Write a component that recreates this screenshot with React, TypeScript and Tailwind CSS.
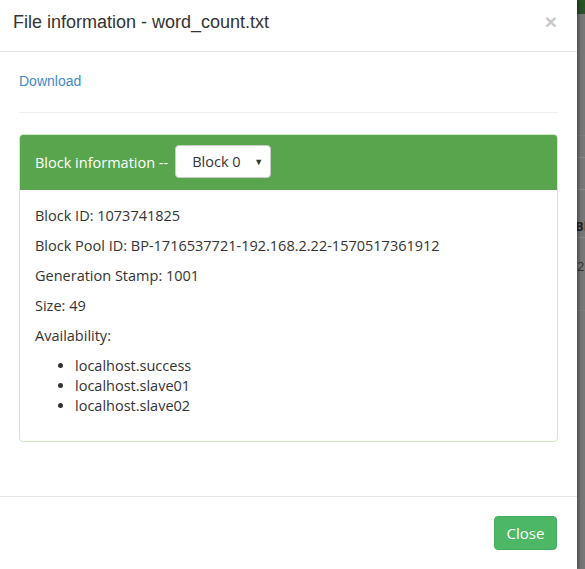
export default function App() {
  const hosts = ["localhost.success", "localhost.slave01", "localhost.slave02"];
  return (
    <div className="flex h-[569px] w-[585px] overflow-hidden bg-[#777]">
      <div className="relative flex w-[577px] shrink-0 flex-col bg-white text-[#333] shadow-[2px_0_3px_rgba(0,0,0,0.35)]">
        <div className="flex h-[52px] items-center justify-between border-b border-[#e5e5e5] pl-[13px] pr-[20px]">
          <h4 className="-mt-[8px] font-['Liberation_Sans',Arial,sans-serif] text-[18px] leading-[26px] text-[#333]">
            File information - word_count.txt
          </h4>
          <span className="-mt-[8px] font-['Liberation_Sans',Arial,sans-serif] text-[21px] font-bold leading-none text-[#c9c9c9]">
            ×
          </span>
        </div>

        <div className="px-[19px] pt-[19px] font-['Open_Sans',sans-serif]">
          <a className="block font-['Liberation_Sans',Arial,sans-serif] text-[14px] leading-[20px] text-[#428bca]">Download</a>
          <div className="mt-[21px] border-t border-[#eee]" />

          <div className="mt-[21px] rounded-[4px] border border-[#d6e9c6]">
            <div className="flex h-[55px] items-center gap-[7px] rounded-t-[3px] bg-[#58a54d] px-[15px] text-[14.5px] text-white">
              <span>Block information --</span>
              <div className="-mt-[2px] flex h-[33px] w-[96px] items-center justify-between rounded-[4px] border border-[#ccc] bg-white pl-[16px] pr-[7px] text-[#333]">
                <span>Block 0</span>
                <span className="text-[9px]">▼</span>
              </div>
            </div>
            <div className="px-[15px] pb-[15px] pt-[16px] text-[14.5px] leading-[20px]">
              <p className="mb-[10px]">Block ID: 1073741825</p>
              <p className="mb-[10px]">Block Pool ID: BP-1716537721-192.168.2.22-1570517361912</p>
              <p className="mb-[10px]">Generation Stamp: 1001</p>
              <p className="mb-[10px]">Size: 49</p>
              <p className="mb-[10px]">Availability:</p>
              <ul className="mb-[10px] list-disc pl-[40px]">
                {hosts.map((h) => (
                  <li key={h}>{h}</li>
                ))}
              </ul>
            </div>
          </div>
        </div>

        <div className="mt-auto flex h-[73px] justify-end border-t border-[#e5e5e5] px-[20px] pt-[19px]">
          <button className="h-[34px] w-[63px] rounded-[4px] border border-[#44ad5d] bg-[#4cb866] font-['Open_Sans',sans-serif] text-[15px] text-white">
            Close
          </button>
        </div>
      </div>

      <div className="flex flex-1 flex-col">
        <div className="h-[14px] bg-[#2c4f2a]" />
        <div className="h-[121px]" />
        <div className="h-[22px] border-t border-[#7f7f7f]" />
        <div className="h-[32px] border-t border-[#888]" />
        <div className="h-[48px] border-t border-[#888] pt-[28px] font-['Open_Sans',sans-serif] text-[13px] font-bold leading-[16px] text-[#222]">
          <span className="-ml-[2px]">Bl</span>
        </div>
        <div className="h-[73px] border-t border-[#888] pt-[20px] font-['Open_Sans',sans-serif] text-[13px] leading-[16px] text-[#333]">
          2
        </div>
        <div className="border-t border-[#7f7f7f]" />
      </div>
    </div>
  );
}
